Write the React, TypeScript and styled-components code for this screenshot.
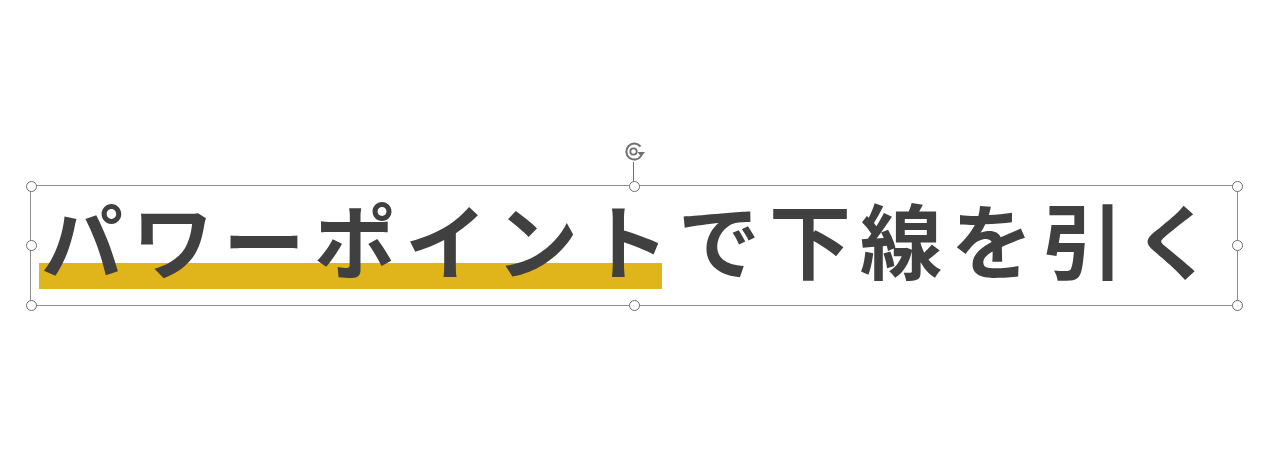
import React from 'react'
import styled, { createGlobalStyle } from 'styled-components'

const Global = createGlobalStyle`
  html, body { margin: 0; padding: 0; background: #ffffff; }
  body { font-family: "Noto Sans CJK JP", "Noto Sans", sans-serif; }
`

const Page = styled.div`
  width: 1280px;
  height: 469px;
  box-sizing: border-box;
  padding: 185px 0 0 30px;
  overflow: hidden;
`

const Frame = styled.div`
  position: relative;
  width: 1208px;
  height: 121px;
  box-sizing: border-box;
  border: 1px solid #8c8c8c;
  display: flex;
  align-items: center;
  padding-left: 10px;
`

const Title = styled.div`
  font-size: 82px;
  font-weight: 700;
  color: #404040;
  letter-spacing: 9px;
  line-height: 1;
  white-space: nowrap;
  margin-top: -16px;
`

const Marked = styled.span`
  background-image: linear-gradient(#e0b41b, #e0b41b);
  background-repeat: no-repeat;
  background-size: calc(100% - 16px) 26px;
  background-position: 0 92%;
  padding-left: 2px;
  margin-left: -2px;
`

const Handle = styled.span<{ $x: number; $y: number }>`
  position: absolute;
  left: ${p => p.$x}%;
  top: ${p => p.$y}%;
  width: 9px;
  height: 9px;
  margin: -5.5px 0 0 -5.5px;
  border: 1px solid #6e6e6e;
  border-radius: 50%;
  background: #ffffff;
`

const Stem = styled.span`
  position: absolute;
  left: 50%;
  top: -24px;
  width: 1px;
  height: 24px;
  margin-left: -1px;
  background: #6e6e6e;
`

const Rotate = styled.svg`
  position: absolute;
  left: 50%;
  top: -46px;
  margin-left: -12px;
  width: 28px;
  height: 24px;
`

const spots = [
  [0, 0], [50, 0], [100, 0],
  [0, 50], [100, 50],
  [0, 100], [50, 100], [100, 100],
]

const App = () => {
  return (
    <Page>
      <Global />
      <Frame>
        <Title>
          <Marked>パワーポイント</Marked>で下線を引く
        </Title>
        <Stem />
        <Rotate viewBox="0 0 28 24">
          <path d="M18.5 6.5 A8 8 0 1 0 19 16" fill="none" stroke="#707070" strokeWidth="2" />
          <circle cx="11.5" cy="11.5" r="3.2" fill="none" stroke="#707070" strokeWidth="1.8" />
          <path d="M15.5 12 L23 12 L19.2 17 Z" fill="#707070" />
        </Rotate>
        {spots.map(([x, y]) => (
          <Handle key={`${x}-${y}`} $x={x} $y={y} />
        ))}
      </Frame>
    </Page>
  )
}

export default App
